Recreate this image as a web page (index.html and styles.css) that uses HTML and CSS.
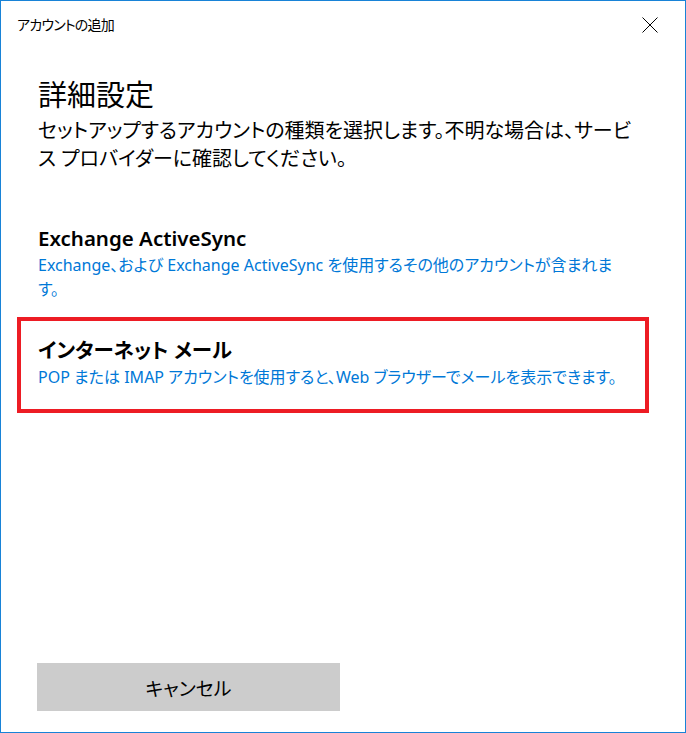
FILE: index.html
```html
<!DOCTYPE html>
<html lang="ja">
<head>
<meta charset="utf-8">
<title>アカウントの追加</title>
<link rel="stylesheet" href="styles.css">
</head>
<body>
<div class="window">
   <div class="titlebar">
      <span class="title">アカウントの追加</span>
      <svg class="close" width="16" height="16" viewBox="0 0 16 16">
         <path d="M0.5 0.5 L15.5 15.5 M15.5 0.5 L0.5 15.5" stroke="#000" stroke-width="1" fill="none"/>
      </svg>
   </div>

   <div class="content">
      <h1>詳細設定</h1>
      <p class="intro">セットアップするアカウントの種類を選択します。不明な場合は、サービ<br>ス プロバイダーに確認してください。</p>

      <div class="option">
         <h2>Exchange ActiveSync</h2>
         <p>Exchange、および Exchange ActiveSync を使用するその他のアカウントが含まれま<br>す。</p>
      </div>

      <div class="option selected">
         <h2>インターネット メール</h2>
         <p>POP または IMAP アカウントを使用すると、Web ブラウザーでメールを表示できます。</p>
      </div>
   </div>

   <div class="footer">
      <button class="cancel">キャンセル</button>
   </div>
</div>
</body>
</html>
```

FILE: styles.css
```css
html, body {
   margin: 0;
   padding: 0;
   background-color: white;
}

body {
   font-family: 'Noto Sans', 'Noto Sans CJK JP', sans-serif;
   font-feature-settings: "palt";
   color: #000;
}

.window {
   box-sizing: border-box;
   width: 686px;
   height: 733px;
   border: 1px solid #1883d7;
   display: flex;
   flex-direction: column;
}

.titlebar {
   height: 47px;
   display: flex;
   align-items: center;
   justify-content: space-between;
   padding: 0 27px 0 16px;
}

.title {
   font-size: 14px;
   line-height: 20px;
   letter-spacing: -0.8px;
}

.close {
   display: block;
   margin-top: 1px;
}

.content {
   padding: 0 36px 0 16px;
}

h1 {
   margin: 29px 0 0 0;
   padding-left: 21px;
   font-size: 29px;
   font-weight: 400;
   line-height: 36px;
}

.intro {
   margin: 4px 0 0 0;
   padding-left: 21px;
   font-size: 20px;
   line-height: 28px;
}

.option {
   border: 4px solid transparent;
   padding: 15px 17px 12px 17px;
}

.intro + .option {
   margin-top: 32px;
}

.option.selected {
   border-color: #ed1c24;
   padding-bottom: 20px;
}

.option h2 {
   margin: 0;
   font-size: 20.5px;
   font-weight: 600;
   line-height: 28px;
}

.option p {
   margin: 1px 0 0 0;
   font-size: 16px;
   line-height: 24px;
   color: #0078d7;
}

.footer {
   margin-top: auto;
   padding: 0 0 21px 36px;
}

.cancel {
   width: 303px;
   height: 48px;
   border: none;
   background-color: #cccccc;
   font-family: 'Noto Sans CJK JP', sans-serif;
   font-feature-settings: "palt";
   font-size: 19px;
   color: #000;
   padding: 0;
}
```
